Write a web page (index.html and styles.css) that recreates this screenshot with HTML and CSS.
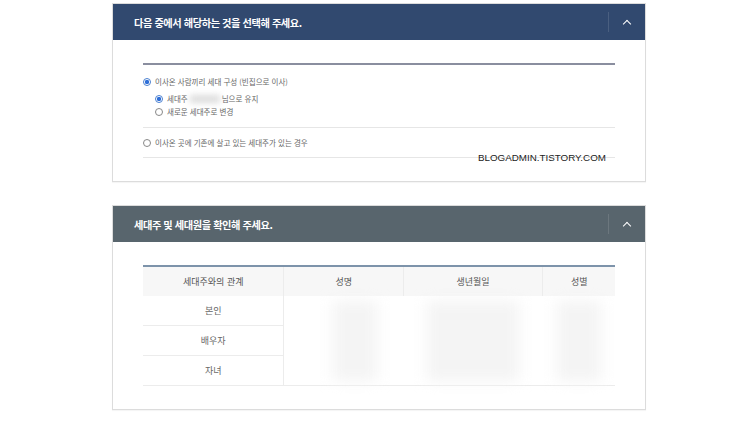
FILE: index.html
```html
<!DOCTYPE html>
<html lang="ko">
<head>
    <meta charset="UTF-8">
    <meta name="viewport" content="width=device-width, initial-scale=1.0">
    <title>세대 구성 확인</title>
    <link rel="stylesheet" href="styles.css">
</head>
<body>

    <div class="wrap">

        <!-- 세대 구성 선택 -->
        <div class="panel">
            <div class="panelHead">
                <h3>다음 중에서 해당하는 것을 선택해 주세요.</h3>
                <span class="toggle"><span class="caret"></span></span>
            </div>
            <div class="panelBody">
                <div class="optGroup">
                    <label class="opt"><span class="radio on"></span>이사온 사람끼리 세대 구성 (빈집으로 이사)</label>
                    <div class="subOpts">
                        <label class="opt"><span class="radio on"></span>세대주 <span class="blur nameBlur"></span> 님으로 유지</label>
                        <label class="opt"><span class="radio"></span>새로운 세대주로 변경</label>
                    </div>
                </div>
                <div class="optGroup">
                    <label class="opt"><span class="radio"></span>이사온 곳에 기존에 살고 있는 세대주가 있는 경우</label>
                </div>
            </div>
            <div class="watermark">BLOGADMIN.TISTORY.COM</div>
        </div>

        <!-- 세대원 확인 -->
        <div class="panel">
            <div class="panelHead grey">
                <h3>세대주 및 세대원을 확인해 주세요.</h3>
                <span class="toggle"><span class="caret"></span></span>
            </div>
            <div class="panelBody tableBody">
                <table class="memberTable">
                    <thead>
                        <tr>
                            <th class="colRel">세대주와의 관계</th>
                            <th class="colName">성명</th>
                            <th class="colBirth">생년월일</th>
                            <th class="colSex">성별</th>
                        </tr>
                    </thead>
                    <tbody>
                        <tr>
                            <td>본인</td>
                            <td rowspan="3" class="blurCell"><span class="blur cellBlur nameCol"></span></td>
                            <td rowspan="3" class="blurCell"><span class="blur cellBlur birthCol"></span></td>
                            <td rowspan="3" class="blurCell"><span class="blur cellBlur sexCol"></span></td>
                        </tr>
                        <tr>
                            <td>배우자</td>
                        </tr>
                        <tr>
                            <td>자녀</td>
                        </tr>
                    </tbody>
                </table>
            </div>
        </div>

    </div>

</body>
</html>
```

FILE: styles.css
```css
body {
    margin: 0;
    background-color: #fff;
    font-family: "Noto Sans CJK KR", "Noto Sans", sans-serif;
    color: #555;
}

.wrap {
    width: 534px;
    margin-left: 112px;
    padding-top: 3px;
}

.panel {
    position: relative;
    border: 1px solid #dcdcdc;
    margin-bottom: 23px;
    box-shadow: 0 1px 1px rgba(0, 0, 0, 0.04);
}

.panelHead {
    height: 36px;
    background-color: #31496f;
    display: flex;
    align-items: center;
    justify-content: space-between;
    padding-left: 21px;
}

.panelHead.grey {
    background-color: #58656d;
}

.panelHead h3 {
    margin: 0;
    font-size: 10.2px;
    font-weight: 700;
    color: #fff;
    letter-spacing: -0.4px;
}

.toggle {
    width: 36px;
    height: 20px;
    border-left: 1px solid rgba(255, 255, 255, 0.12);
    display: flex;
    align-items: center;
    justify-content: center;
}

.caret {
    width: 5px;
    height: 5px;
    border-top: 1.5px solid #fff;
    border-left: 1.5px solid #fff;
    transform: rotate(45deg);
    margin-top: 4px;
}

.panelBody {
    padding: 23px 30px 23px;
}

.optGroup {
    border-bottom: 1px solid #e6e6e6;
    padding: 8px 0 8px;
}

.optGroup:first-child {
    border-top: 2px solid #8a8e9f;
    padding-top: 10px;
    padding-bottom: 9px;
}

.opt {
    display: flex;
    align-items: center;
    font-size: 7.5px;
    line-height: 13px;
    color: #666;
}

.subOpts {
    padding: 4px 0 0 12px;
}

.radio {
    width: 6px;
    height: 6px;
    border: 1px solid #888;
    border-radius: 50%;
    margin-right: 4px;
    flex-shrink: 0;
    background: #fff;
}

.radio.on {
    border-color: #4a7fd0;
    background: radial-gradient(circle, #2f6fd8 0 2px, #fff 2.3px);
}

.blur {
    display: inline-block;
    background-color: #dcdcdc;
    filter: blur(3px);
}

.nameBlur {
    width: 30px;
    height: 8px;
    margin: 0 2px;
}

.watermark {
    position: absolute;
    left: 365px;
    top: 148px;
    font-family: "Liberation Sans", Arial, sans-serif;
    font-size: 9.8px;
    color: #222;
}

.tableBody {
    padding: 23px 30px 23px;
}

.memberTable {
    width: 472px;
    border-collapse: collapse;
    border-top: 2px solid #7d93aa;
    font-size: 9px;
    color: #666;
}

.memberTable th {
    height: 29px;
    padding: 0;
    background-color: #f7f7f7;
    font-weight: 400;
    color: #555;
    border-right: 1px solid #ececec;
}

.memberTable th:last-child {
    border-right: none;
}

.memberTable td {
    height: 29px;
    padding: 0;
    text-align: center;
    border-bottom: 1px solid #ececec;
    border-right: 1px solid #ececec;
}

.memberTable td.blurCell {
    border-right: none;
}

.colRel { width: 142px; }
.colName { width: 119px; }
.colBirth { width: 139px; }
.colSex { width: 72px; }

.cellBlur {
    background-color: #f4f4f4;
    filter: blur(7px);
    vertical-align: middle;
}

.nameCol {
    width: 44px;
    height: 80px;
    margin-left: 22px;
}

.birthCol {
    width: 92px;
    height: 80px;
}

.sexCol {
    width: 44px;
    height: 80px;
}
```
